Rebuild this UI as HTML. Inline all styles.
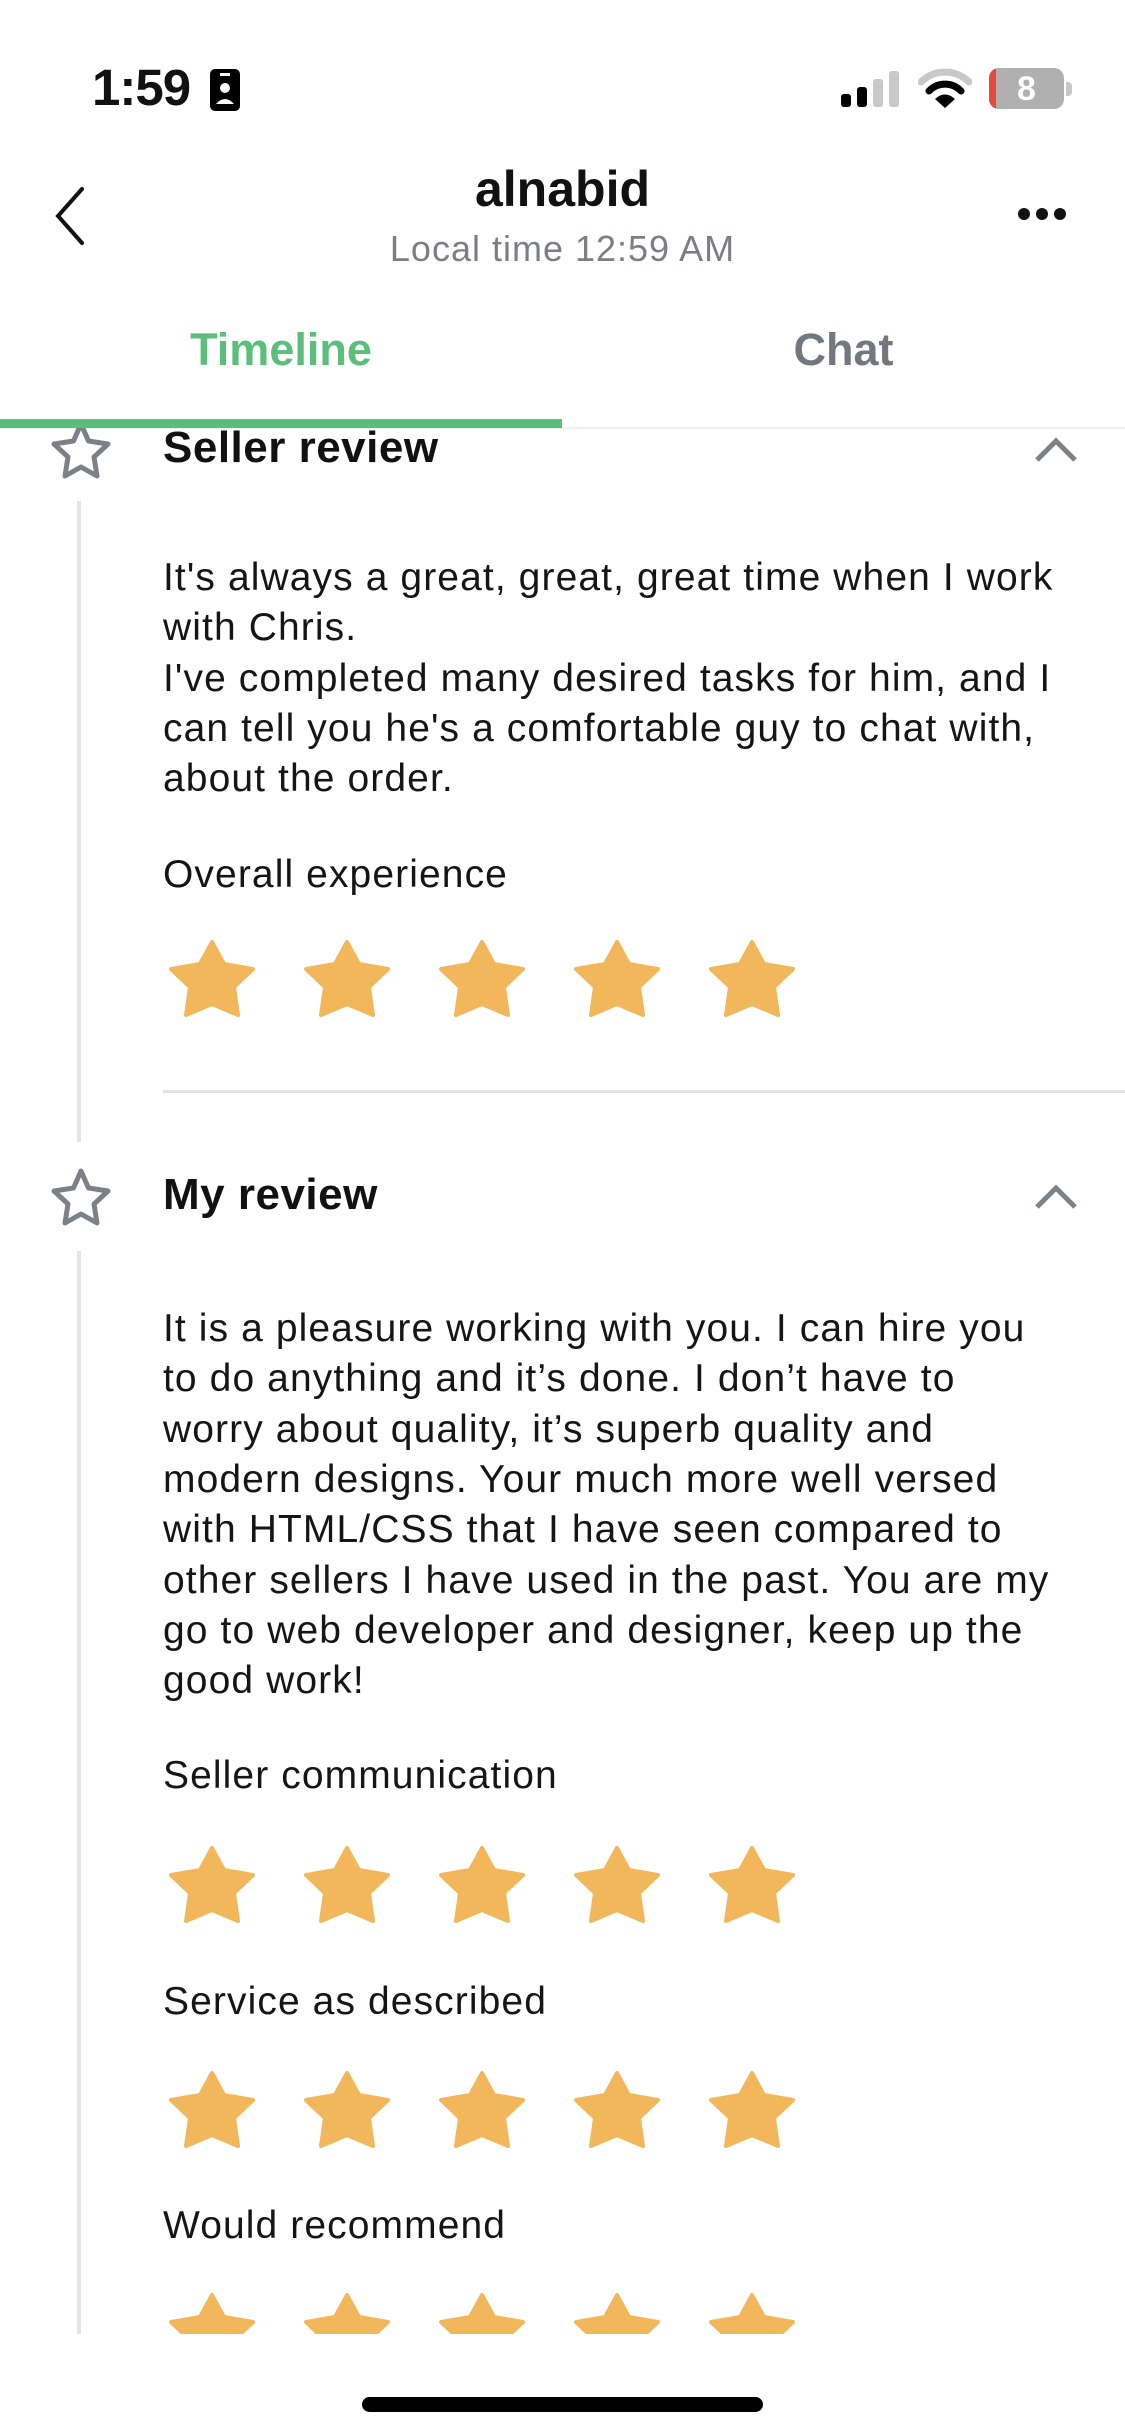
<!DOCTYPE html>
<html><head><meta charset="utf-8"><style>
*{margin:0;padding:0;box-sizing:border-box}
body{width:1125px;height:2436px;background:#fff;position:relative;overflow:hidden;font-family:"Liberation Sans",sans-serif;color:#111}
.a{position:absolute;white-space:nowrap}
.t{font-size:39px;line-height:50px;left:163px;color:#151515;letter-spacing:1.1px}
.h{font-size:44px;font-weight:bold;left:163px;color:#111;letter-spacing:0.5px}
.clip{position:absolute;left:0;top:428px;width:1125px;height:1906px;overflow:hidden}
.vl{position:absolute;left:77px;width:4px;background:#e4e4e4}
.stars{position:absolute;left:168px;height:80px}
.stars svg{position:absolute;top:0}
</style></head><body>
<div class="a" style="left:92px;top:58px;font-size:51px;font-weight:bold;letter-spacing:-1px">1:59</div>
<svg class="a" style="left:209px;top:68px" width="32" height="44" viewBox="0 0 32 44"><rect x="1" y="1" width="30" height="42" rx="5" fill="#000"/><circle cx="16" cy="20" r="5" fill="#fff"/><path d="M7 36 Q16 26 25 36 Z" fill="#fff"/><rect x="11" y="5" width="10" height="3" fill="#fff"/></svg>
<svg class="a" style="left:841px;top:70px" width="58" height="38"><rect x="0" y="24" width="10" height="13" rx="3" fill="#000"/><rect x="16" y="17" width="10" height="20" rx="3" fill="#000"/><rect x="32" y="9" width="10" height="28" rx="3" fill="#c8c8c8"/><rect x="48" y="1" width="10" height="36" rx="3" fill="#c8c8c8"/></svg>
<svg class="a" style="left:918px;top:68px" width="54" height="42" viewBox="0 0 54 42"><path d="M3 14 A34 34 0 0 1 51 14" stroke="#c8c8c8" stroke-width="7" fill="none" stroke-linecap="round"/><path d="M11 23 A22 22 0 0 1 43 23" stroke="#000" stroke-width="7" fill="none" stroke-linecap="round"/><path d="M17 31 Q27 22 37 31 L27 40 Z" fill="#000"/></svg>
<div class="a" style="left:989px;top:68px;width:75px;height:41px;border-radius:10px;background:#b0b0b0;overflow:hidden"><div style="position:absolute;left:0;top:0;width:7px;height:41px;background:#e8473b"></div><div style="position:absolute;left:0;width:75px;text-align:center;top:2px;font-size:34px;font-weight:bold;color:#fff">8</div></div>
<div class="a" style="left:1066px;top:82px;width:6px;height:14px;border-radius:0 4px 4px 0;background:#c8c8c8"></div>
<svg class="a" style="left:48px;top:184px" width="42" height="64"><path d="M34 5 L10 32 L34 59" stroke="#111" stroke-width="4" fill="none" stroke-linecap="round"/></svg>
<div class="a" style="left:0;width:1125px;text-align:center;top:160px;font-size:50px;font-weight:bold;color:#111">alnabid</div>
<div class="a" style="left:0;width:1125px;text-align:center;top:228px;font-size:36px;letter-spacing:1px;color:#7b7e86">Local time 12:59 AM</div>
<svg class="a" style="left:1016px;top:205px" width="52" height="18"><circle cx="8" cy="9" r="6" fill="#111"/><circle cx="26" cy="9" r="6" fill="#111"/><circle cx="44" cy="9" r="6" fill="#111"/></svg>
<div class="a" style="left:0;width:562px;text-align:center;top:324px;font-size:45px;font-weight:bold;color:#5bbf7b">Timeline</div>
<div class="a" style="left:562px;width:563px;text-align:center;top:324px;font-size:45px;font-weight:bold;color:#74777f">Chat</div>
<div class="a" style="left:0;top:427px;width:1125px;height:2px;background:#f0f0f0"></div>
<div class="a" style="left:0;top:419px;width:562px;height:9px;background:#5bbf7b"></div>

<div class="clip">
<svg class="a" style="left:49px;top:-8px" width="64" height="60" viewBox="0 0 64 60"><path d="M32 4 L39.5 21 L59 24 L45 37 L48 56 L32 47 L16 56 L19 37 L5 24 L24.5 21 Z" stroke="#7d8087" stroke-width="5" fill="none" stroke-linejoin="round"/></svg>
<div class="a h" style="top:-5px">Seller review</div>
<svg class="a" style="left:1033px;top:8px" width="46" height="28"><path d="M4 24 L23 5 L42 24" stroke="#7d8087" stroke-width="5" fill="none"/></svg>
<div class="vl" style="top:73px;height:641px"></div>
<div class="a t" style="top:125px">It's always a great, great, great time when I work</div>
<div class="a t" style="top:175px">with Chris.</div>
<div class="a t" style="top:226px">I've completed many desired tasks for him, and I</div>
<div class="a t" style="top:276px">can tell you he's a comfortable guy to chat with,</div>
<div class="a t" style="top:326px">about the order.</div>
<div class="a t" style="top:422px">Overall experience</div>
<div class="stars" style="top:511px"></div>
<div class="a" style="left:163px;top:662px;width:962px;height:3px;background:#e4e4e4"></div>

<svg class="a" style="left:49px;top:739px" width="64" height="60" viewBox="0 0 64 60"><path d="M32 4 L39.5 21 L59 24 L45 37 L48 56 L32 47 L16 56 L19 37 L5 24 L24.5 21 Z" stroke="#7d8087" stroke-width="5" fill="none" stroke-linejoin="round"/></svg>
<div class="a h" style="top:742px">My review</div>
<svg class="a" style="left:1033px;top:755px" width="46" height="28"><path d="M4 24 L23 5 L42 24" stroke="#7d8087" stroke-width="5" fill="none"/></svg>
<div class="vl" style="top:823px;height:1100px"></div>
<div class="a t" style="top:876px">It is a pleasure working with you. I can hire you</div>
<div class="a t" style="top:926px">to do anything and it’s done. I don’t have to</div>
<div class="a t" style="top:977px">worry about quality, it’s superb quality and</div>
<div class="a t" style="top:1027px">modern designs. Your much more well versed</div>
<div class="a t" style="top:1077px">with HTML/CSS that I have seen compared to</div>
<div class="a t" style="top:1128px">other sellers I have used in the past. You are my</div>
<div class="a t" style="top:1178px">go to web developer and designer, keep up the</div>
<div class="a t" style="top:1228px">good work!</div>
<div class="a t" style="top:1323px">Seller communication</div>
<div class="stars" style="top:1417px"></div>
<div class="a t" style="top:1549px">Service as described</div>
<div class="stars" style="top:1642px"></div>
<div class="a t" style="top:1773px">Would recommend</div>
<div class="stars" style="top:1864px"></div>
</div>
<div class="a" style="left:362px;top:2397px;width:401px;height:15px;border-radius:8px;background:#000"></div>
<script>
var st='<svg width="88" height="80" viewBox="0 0 88 80"><path d="M44 3 L56 25 L85 30 L66 48 L70 76 L44 65 L18 76 L22 48 L3 30 L32 25 Z" fill="#f2b75a" stroke="#f2b75a" stroke-width="4" stroke-linejoin="round"/></svg>';
document.querySelectorAll('.stars').forEach(function(d){var h='';for(var i=0;i<5;i++)h+='<div style="position:absolute;top:0;left:'+(i*135)+'px">'+st+'</div>';d.innerHTML=h;});
</script>
</body></html>
